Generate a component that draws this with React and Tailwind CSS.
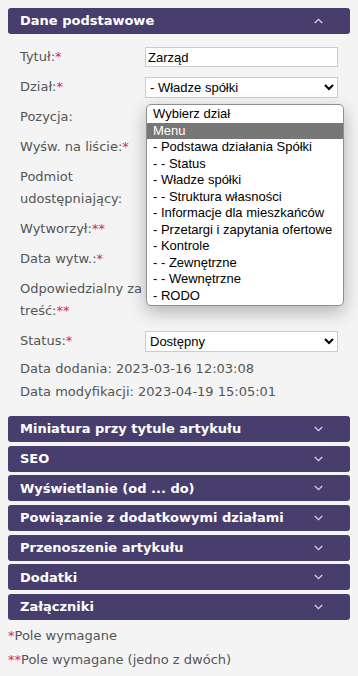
import React from 'react'

const Star = ({ n = 1 }) => (
  <span className="text-[#e0245e]">{'*'.repeat(n)}</span>
)

const Chevron = ({ up }) => (
  <svg width="9" height="6" viewBox="0 0 9 6" className="mr-[27px]">
    <path
      d={up ? 'M0.8 5 L4.5 1.3 L8.2 5' : 'M0.8 1 L4.5 4.7 L8.2 1'}
      fill="none"
      stroke="#d4d0e0"
      strokeWidth="1.3"
    />
  </svg>
)

const PanelHeader = ({ title, open }) => (
  <div className="flex h-[26px] items-center justify-between rounded-[3px] bg-[#483e6d] pl-3 text-[13px] font-bold text-white">
    <span>{title}</span>
    <Chevron up={open} />
  </div>
)

const Row = ({ label, children }) => (
  <div className="flex py-1">
    <div className="w-[125px] shrink-0 leading-[22px]">{label}</div>
    <div className="flex w-[200px] items-center">{children}</div>
  </div>
)

const options = [
  'Wybierz dział',
  'Menu',
  '- Podstawa działania Spółki',
  '- - Status',
  '- Władze spółki',
  '- - Struktura własności',
  '- Informacje dla mieszkańców',
  '- Przetargi i zapytania ofertowe',
  '- Kontrole',
  '- - Zewnętrzne',
  '- - Wewnętrzne',
  '- RODO',
]

export default function App() {
  return (
    <div className="min-h-[676px] bg-[#f4f4f4] p-2 font-['Verdana','DejaVu_Sans',sans-serif] text-[13px] text-[#555]">
      <PanelHeader title="Dane podstawowe" open />

      <div className="relative px-3 pt-2 pb-[13px]">
        <Row label={<>Tytuł:<Star /></>}>
          <input
            defaultValue="Zarząd"
            className="h-[20px] w-full border border-[#ccc] bg-white px-[2px] font-['Liberation_Sans',Arial,sans-serif] text-[13px] text-black outline-none"
          />
        </Row>
        <Row label={<>Dział:<Star /></>}>
          <select
            defaultValue="- Władze spółki"
            className="h-[21px] w-full border border-[#ccc] bg-white font-['Liberation_Sans',Arial,sans-serif] text-[13px] text-black"
          >
            {options.map((o) => (
              <option key={o}>{o}</option>
            ))}
          </select>
        </Row>
        <Row label="Pozycja:" />
        <Row label={<>Wyśw. na liście:<Star /></>} />
        <Row label={<>Podmiot<br />udostępniający:</>} />
        <Row label={<>Wytworzył:<Star n={2} /></>} />
        <Row label={<>Data wytw.:<Star /></>} />
        <Row label={<>Odpowiedzialny za<br />treść:<Star n={2} /></>} />
        <Row label={<>Status:<Star /></>}>
          <select
            defaultValue="Dostępny"
            className="h-[21px] w-full border border-[#ccc] bg-white font-['Liberation_Sans',Arial,sans-serif] text-[13px] text-black"
          >
            <option>Dostępny</option>
            <option>Niedostępny</option>
          </select>
        </Row>
        <div className="pt-px leading-[23px]">Data dodania: 2023-03-16 12:03:08</div>
        <div className="leading-[23px]">Data modyfikacji: 2023-04-19 15:05:01</div>

        {/* open list of the "Dział" select */}
        <div className="absolute top-[70px] left-[138px] w-[198px] overflow-hidden rounded-[5px] border border-[#8f8f8f] bg-white py-px font-['Liberation_Sans',Arial,sans-serif] text-[13px] leading-[16.5px] text-black shadow-[0_6px_18px_rgba(0,0,0,0.28)]">
          {options.map((o) => (
            <div
              key={o}
              className={o === 'Menu' ? 'bg-[#777] px-[6px] text-white' : 'px-[6px]'}
            >
              {o}
            </div>
          ))}
        </div>
      </div>

      <div className="flex flex-col gap-[3.7px]">
        <PanelHeader title="Miniatura przy tytule artykułu" />
        <PanelHeader title="SEO" />
        <PanelHeader title="Wyświetlanie (od ... do)" />
        <PanelHeader title="Powiązanie z dodatkowymi działami" />
        <PanelHeader title="Przenoszenie artykułu" />
        <PanelHeader title="Dodatki" />
        <PanelHeader title="Załączniki" />
      </div>

      <div className="pt-1 leading-[24px]">
        <div><Star />Pole wymagane</div>
        <div><Star n={2} />Pole wymagane (jedno z dwóch)</div>
      </div>
    </div>
  )
}
